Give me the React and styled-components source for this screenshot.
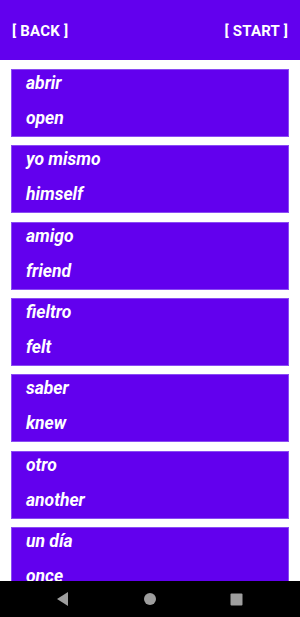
import React from "react";
import styled, { createGlobalStyle } from "styled-components";

const GlobalStyle = createGlobalStyle`
  html, body {
    margin: 0;
    padding: 0;
    background: #ffffff;
    font-family: Roboto, "Noto Sans", "Liberation Sans", sans-serif;
  }
`;

const Screen = styled.div`
  width: 300px;
  height: 617px;
  display: flex;
  flex-direction: column;
  overflow: hidden;
  background: #ffffff;
`;

const Header = styled.header`
  height: 60px;
  flex-shrink: 0;
  background: #6200ee;
  display: flex;
  align-items: center;
  justify-content: space-between;
  padding: 1px 12px 0 12px;
  box-sizing: border-box;
`;

const HeaderButton = styled.button`
  background: none;
  border: none;
  padding: 0;
  color: #ffffff;
  font-family: Roboto, "Liberation Sans", sans-serif;
  font-weight: 700;
  font-size: 15px;
  letter-spacing: 0.2px;
  cursor: pointer;
`;

const List = styled.div`
  flex: 1;
  overflow: hidden;
  display: flex;
  flex-direction: column;
  gap: 8.35px;
  padding: 9px 11px 0;
`;

const Card = styled.div`
  flex-shrink: 0;
  height: 68px;
  box-sizing: border-box;
  background: #6200ee;
  border: 1px solid #8a4cf3;
  padding: 0 0 0 14px;
`;

const Word = styled.div`
  color: #ffffff;
  font-style: italic;
  font-weight: 700;
  font-size: 17.5px;
  line-height: 26px;
  margin-top: ${(props) => (props.second ? "9px" : "0")};
`;

const NavBar = styled.nav`
  height: 36px;
  flex-shrink: 0;
  background: #000000;
  display: flex;
  align-items: center;
  justify-content: space-between;
  padding: 0 57px 0 56px;
`;

const words = [
  ["abrir", "open"],
  ["yo mismo", "himself"],
  ["amigo", "friend"],
  ["fieltro", "felt"],
  ["saber", "knew"],
  ["otro", "another"],
  ["un día", "once"],
];

export default function App() {
  return (
    <>
      <GlobalStyle />
      <Screen>
        <Header>
          <HeaderButton>[ BACK ]</HeaderButton>
          <HeaderButton>[ START ]</HeaderButton>
        </Header>
        <List>
          {words.map(([es, en], index) => (
            <Card key={index}>
              <Word>{es}</Word>
              <Word second>{en}</Word>
            </Card>
          ))}
        </List>
        <NavBar>
          <svg width="13" height="16" viewBox="0 0 13 16">
            <polygon points="12,1 12,15 1,8" fill="#9e9e9e" />
          </svg>
          <svg width="14" height="14" viewBox="0 0 14 14">
            <circle cx="7" cy="7" r="6" fill="#9e9e9e" />
          </svg>
          <svg width="13" height="13" viewBox="0 0 13 13">
            <rect x="0.5" y="0.5" width="12" height="12" rx="1" fill="#9e9e9e" />
          </svg>
        </NavBar>
      </Screen>
    </>
  );
}
